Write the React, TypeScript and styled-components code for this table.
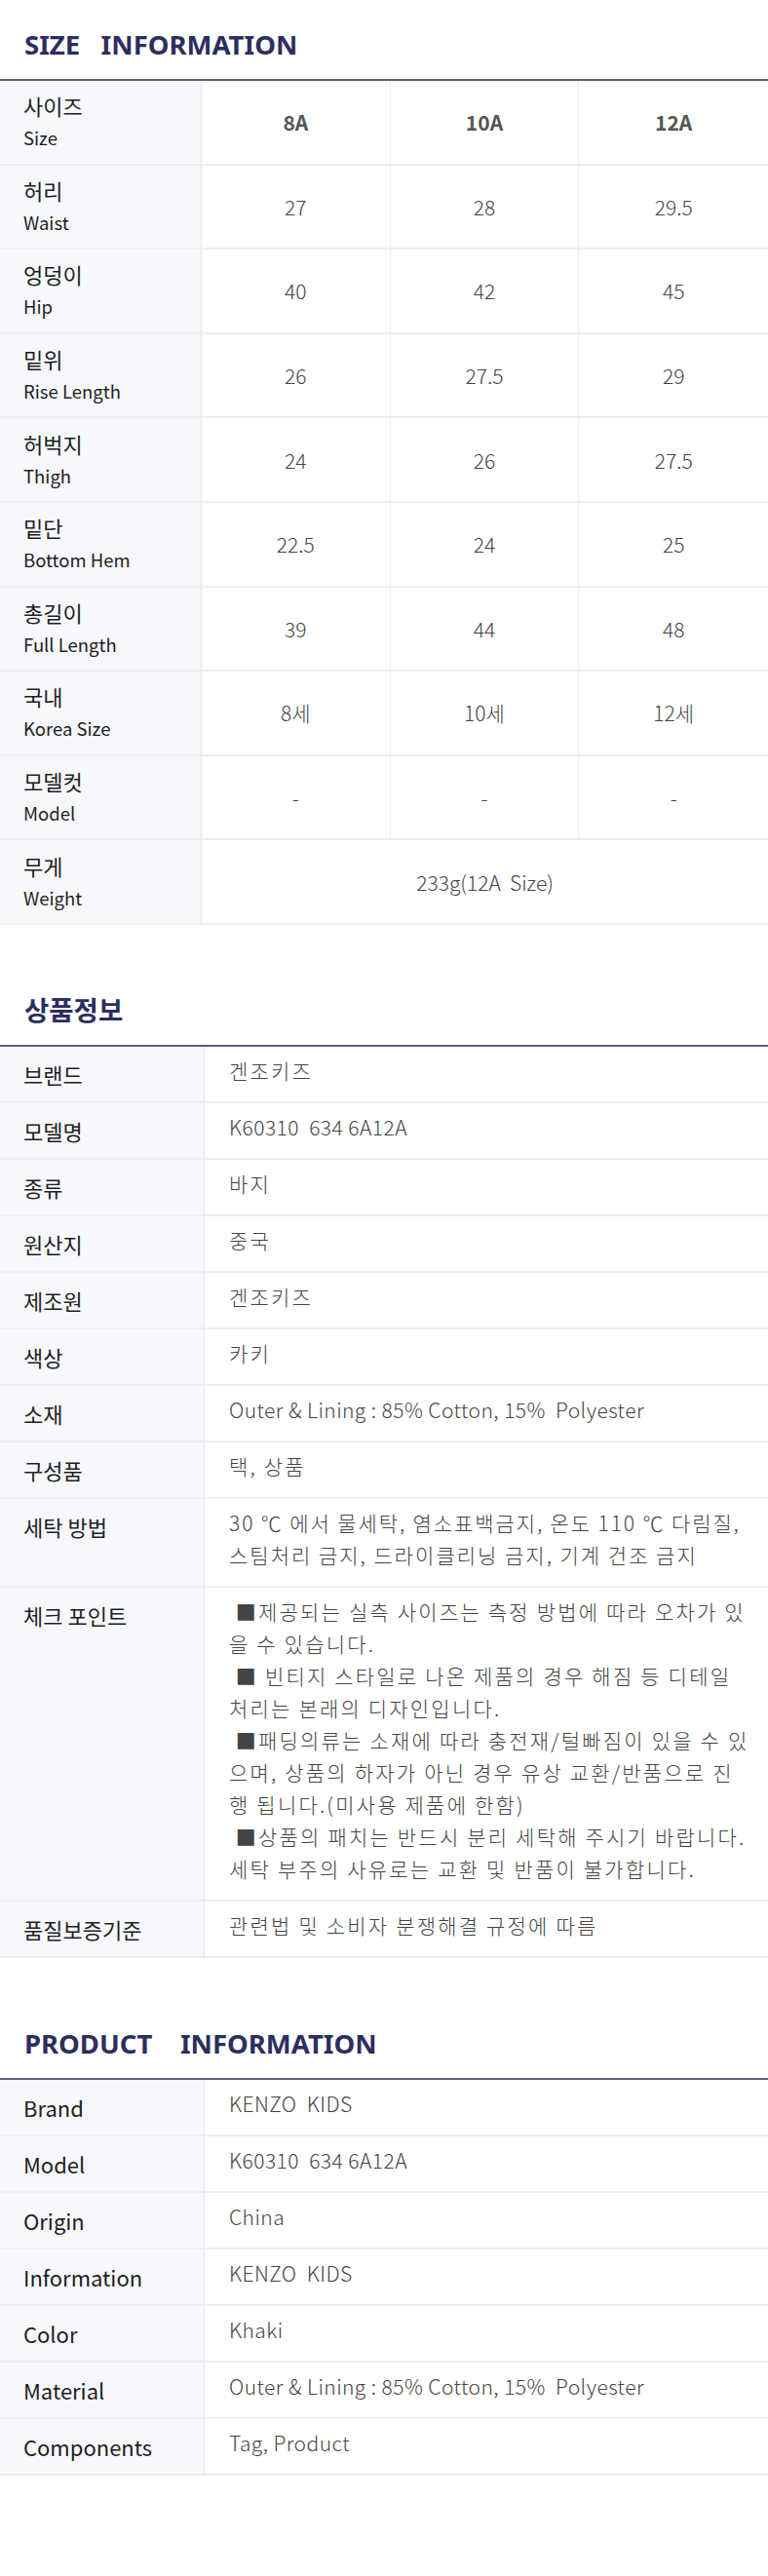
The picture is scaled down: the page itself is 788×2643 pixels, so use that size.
import React from "react";
import styled, { createGlobalStyle } from "styled-components";

const Global = createGlobalStyle`
  html, body { margin: 0; padding: 0; background: #ffffff; }
  body {
    font-family: "Noto Sans CJK KR", "Noto Sans", sans-serif;
    -webkit-font-smoothing: antialiased;
  }
`;

const Page = styled.div`
  width: 788px;
  padding: 26px 0 107px;
  display: flex;
  flex-direction: column;
  gap: 68px;
`;

const Section = styled.section`
  display: flex;
  flex-direction: column;
`;

const Title = styled.h2`
  margin: 0 0 15px;
  padding-left: 25px;
  font-family: "Noto Sans", "Noto Sans CJK KR", sans-serif;
  font-size: 27.5px;
  line-height: 40px;
  font-weight: 700;
  color: #2c2e5e;
  white-space: pre;
`;

const SizeGrid = styled.div`
  display: grid;
  grid-template-columns: 207px repeat(3, 1fr);
  border-top: 2px solid #5c5e86;
`;

const LabelCell = styled.div`
  background: #f7f8fc;
  border-right: 1px solid #e3e5ee;
  border-bottom: 2px solid #efefef;
  padding: 9.3px 24px;
  display: flex;
  flex-direction: column;
  color: #1e1e1e;
`;

const LabelKo = styled.span`
  font-size: 22px;
  line-height: 33px;
`;

const LabelEn = styled.span`
  font-size: 18.5px;
  line-height: 33px;
`;

const DataCell = styled.div<{ $head?: boolean; $span?: number; $last?: boolean }>`
  display: flex;
  align-items: center;
  justify-content: center;
  border-bottom: 2px solid #efefef;
  border-right: ${(p) => (p.$last ? "none" : "1px solid #efefef")};
  grid-column: ${(p) => (p.$span ? `span ${p.$span}` : "auto")};
  font-size: 21px;
  font-weight: ${(p) => (p.$head ? 700 : 300)};
  color: ${(p) => (p.$head ? "#555555" : "#444444")};
  white-space: pre;
`;

const InfoGrid = styled.div`
  display: grid;
  grid-template-columns: 210px 1fr;
  border-top: 2px solid #5c5e86;
`;

const InfoLabel = styled.div`
  background: #f7f8fc;
  border-right: 1px solid #e3e5ee;
  border-bottom: 2px solid #efefef;
  padding: 12px 24px 11px;
  font-size: 22px;
  line-height: 33px;
  color: #1e1e1e;
  white-space: nowrap;
`;

const InfoValue = styled.div`
  border-bottom: 2px solid #efefef;
  padding: 8px 16px 15px 25px;
  font-size: 21px;
  font-weight: 300;
  line-height: 33px;
  color: #444444;
  display: flex;
  flex-direction: column;
`;

const Line = styled.span<{ $ls: number }>`
  white-space: pre;
  letter-spacing: ${(p) => p.$ls}px;
`;

type SizeRow = { ko: string; en: string; values: string[]; head?: boolean; span?: boolean };

const sizeRows: SizeRow[] = [
  { ko: "사이즈", en: "Size", values: ["8A", "10A", "12A"], head: true },
  { ko: "허리", en: "Waist", values: ["27", "28", "29.5"] },
  { ko: "엉덩이", en: "Hip", values: ["40", "42", "45"] },
  { ko: "밑위", en: "Rise Length", values: ["26", "27.5", "29"] },
  { ko: "허벅지", en: "Thigh", values: ["24", "26", "27.5"] },
  { ko: "밑단", en: "Bottom Hem", values: ["22.5", "24", "25"] },
  { ko: "총길이", en: "Full Length", values: ["39", "44", "48"] },
  { ko: "국내", en: "Korea Size", values: ["8세", "10세", "12세"] },
  { ko: "모델컷", en: "Model", values: ["-", "-", "-"] },
  { ko: "무게", en: "Weight", values: ["233g(12A  Size)"], span: true },
];

type ValueLine = { t: string; ls: number };
const K = 2.2;
const L = 0.45;
const ko = (t: string, ls = K): ValueLine => ({ t, ls });
const la = (t: string, ls = L): ValueLine => ({ t, ls });

const koInfo: [string, ValueLine[]][] = [
  ["브랜드", [ko("겐조키즈")]],
  ["모델명", [la("K60310  634 6A12A")]],
  ["종류", [ko("바지")]],
  ["원산지", [ko("중국")]],
  ["제조원", [ko("겐조키즈")]],
  ["색상", [ko("카키")]],
  ["소재", [la("Outer & Lining : 85% Cotton, 15%  Polyester")]],
  ["구성품", [ko("택, 상품")]],
  ["세탁 방법", [ko("30 ℃ 에서 물세탁, 염소표백금지, 온도 110 ℃ 다림질,", 1.9), ko("스팀처리 금지, 드라이클리닝 금지, 기계 건조 금지", 2.0)]],
  [
    "체크 포인트",
    [
      ko("\u00a0■제공되는 실측 사이즈는 측정 방법에 따라 오차가 있"),
      ko("을 수 있습니다."),
      ko("\u00a0■ 빈티지 스타일로 나온 제품의 경우 해짐 등 디테일"),
      ko("처리는 본래의 디자인입니다."),
      ko("\u00a0■패딩의류는 소재에 따라 충전재/털빠짐이 있을 수 있"),
      ko("으며, 상품의 하자가 아닌 경우 유상 교환/반품으로 진"),
      ko("행 됩니다.(미사용 제품에 한함)"),
      ko("\u00a0■상품의 패치는 반드시 분리 세탁해 주시기 바랍니다."),
      ko("세탁 부주의 사유로는 교환 및 반품이 불가합니다."),
    ],
  ],
  ["품질보증기준", [ko("관련법 및 소비자 분쟁해결 규정에 따름")]],
];

const enInfo: [string, ValueLine[]][] = [
  ["Brand", [la("KENZO  KIDS")]],
  ["Model", [la("K60310  634 6A12A")]],
  ["Origin", [la("China")]],
  ["Information", [la("KENZO  KIDS")]],
  ["Color", [la("Khaki")]],
  ["Material", [la("Outer & Lining : 85% Cotton, 15%  Polyester")]],
  ["Components", [la("Tag, Product")]],
];

function InfoTable({ rows }: { rows: [string, ValueLine[]][] }) {
  return (
    <InfoGrid>
      {rows.map(([label, lines]) => (
        <React.Fragment key={label}>
          <InfoLabel>{label}</InfoLabel>
          <InfoValue>
            {lines.map((l, i) => (
              <Line key={i} $ls={l.ls}>
                {l.t}
              </Line>
            ))}
          </InfoValue>
        </React.Fragment>
      ))}
    </InfoGrid>
  );
}

export default function App() {
  return (
    <>
      <Global />
      <Page>
        <Section>
          <Title>{"SIZE   INFORMATION"}</Title>
          <SizeGrid>
            {sizeRows.map((r) => (
              <React.Fragment key={r.ko}>
                <LabelCell>
                  <LabelKo>{r.ko}</LabelKo>
                  <LabelEn>{r.en}</LabelEn>
                </LabelCell>
                {r.span ? (
                  <DataCell $span={3} $last>
                    {r.values[0]}
                  </DataCell>
                ) : (
                  r.values.map((v, i) => (
                    <DataCell key={i} $head={r.head} $last={i === 2}>
                      {v}
                    </DataCell>
                  ))
                )}
              </React.Fragment>
            ))}
          </SizeGrid>
        </Section>
        <Section>
          <Title>상품정보</Title>
          <InfoTable rows={koInfo} />
        </Section>
        <Section>
          <Title>{"PRODUCT    INFORMATION"}</Title>
          <InfoTable rows={enInfo} />
        </Section>
      </Page>
    </>
  );
}
